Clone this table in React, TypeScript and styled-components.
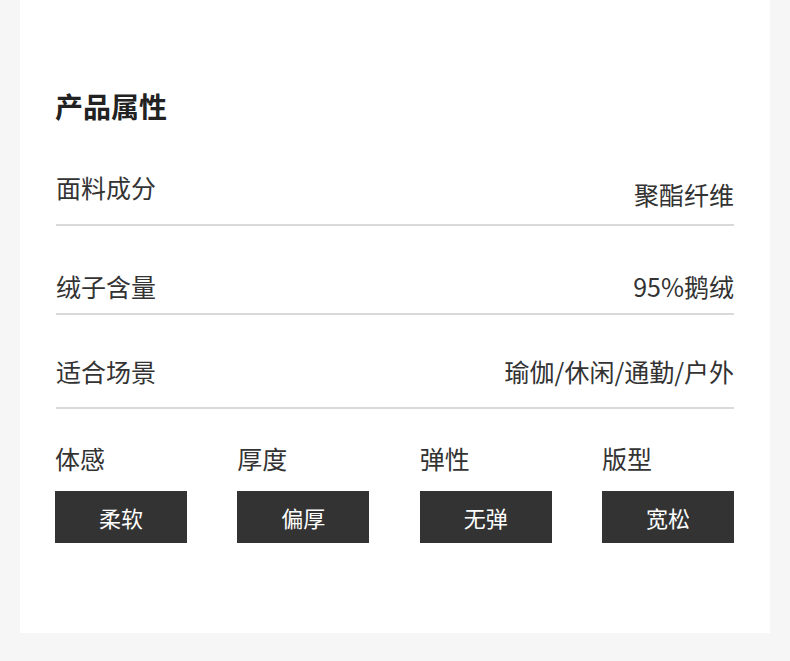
import styled, { createGlobalStyle } from 'styled-components'

const Global = createGlobalStyle`
  html, body {
    margin: 0;
    padding: 0;
    background: #f6f6f6;
  }
  body {
    font-family: "Noto Sans CJK SC", "Noto Sans", sans-serif;
    color: #333;
  }
`

const Page = styled.div`
  width: 790px;
  height: 661px;
  background: #f6f6f6;
  overflow: hidden;
`

const Card = styled.section`
  margin: 0 20px;
  background: #fff;
  padding: 92px 36px 90px 35px;
`

const Title = styled.h2`
  margin: 0 0 55px;
  font-size: 28px;
  line-height: 28px;
  font-weight: 700;
  color: #222;
`

const Row = styled.div<{ $pt: number; $pb: number }>`
  display: flex;
  justify-content: space-between;
  align-items: flex-start;
  margin-left: 1px;
  padding: ${p => p.$pt}px 0 ${p => p.$pb}px;
  border-bottom: 2px solid #d9d9d9;
`

const Label = styled.span`
  font-size: 25px;
  line-height: 24px;
`

const Value = styled.span<{ $shift?: number }>`
  font-size: 25px;
  line-height: 24px;
  margin-top: ${p => p.$shift ?? 0}px;
`

const Grid = styled.div`
  display: grid;
  grid-template-columns: repeat(4, 132px);
  justify-content: space-between;
  margin-top: 37px;
`

const Attr = styled.div`
  display: flex;
  flex-direction: column;
  gap: 21px;
`

const Tag = styled.div`
  height: 52px;
  background: #333;
  color: #fff;
  font-size: 22px;
  display: flex;
  align-items: center;
  justify-content: center;
`

const rows = [
  { label: '面料成分', value: '聚酯纤维', pt: 0, pb: 18, shift: 7 },
  { label: '绒子含量', value: '95%鹅绒', pt: 48, pb: 15, shift: 0 },
  { label: '适合场景', value: '瑜伽/休闲/通勤/户外', pt: 44, pb: 24, shift: 0 },
]

const attrs = [
  { label: '体感', value: '柔软' },
  { label: '厚度', value: '偏厚' },
  { label: '弹性', value: '无弹' },
  { label: '版型', value: '宽松' },
]

function App() {
  return (
    <Page>
      <Global />
      <Card>
        <Title>产品属性</Title>
        {rows.map(r => (
          <Row key={r.label} $pt={r.pt} $pb={r.pb}>
            <Label>{r.label}</Label>
            <Value $shift={r.shift}>{r.value}</Value>
          </Row>
        ))}
        <Grid>
          {attrs.map(a => (
            <Attr key={a.label}>
              <Label>{a.label}</Label>
              <Tag>{a.value}</Tag>
            </Attr>
          ))}
        </Grid>
      </Card>
    </Page>
  )
}

export default App
